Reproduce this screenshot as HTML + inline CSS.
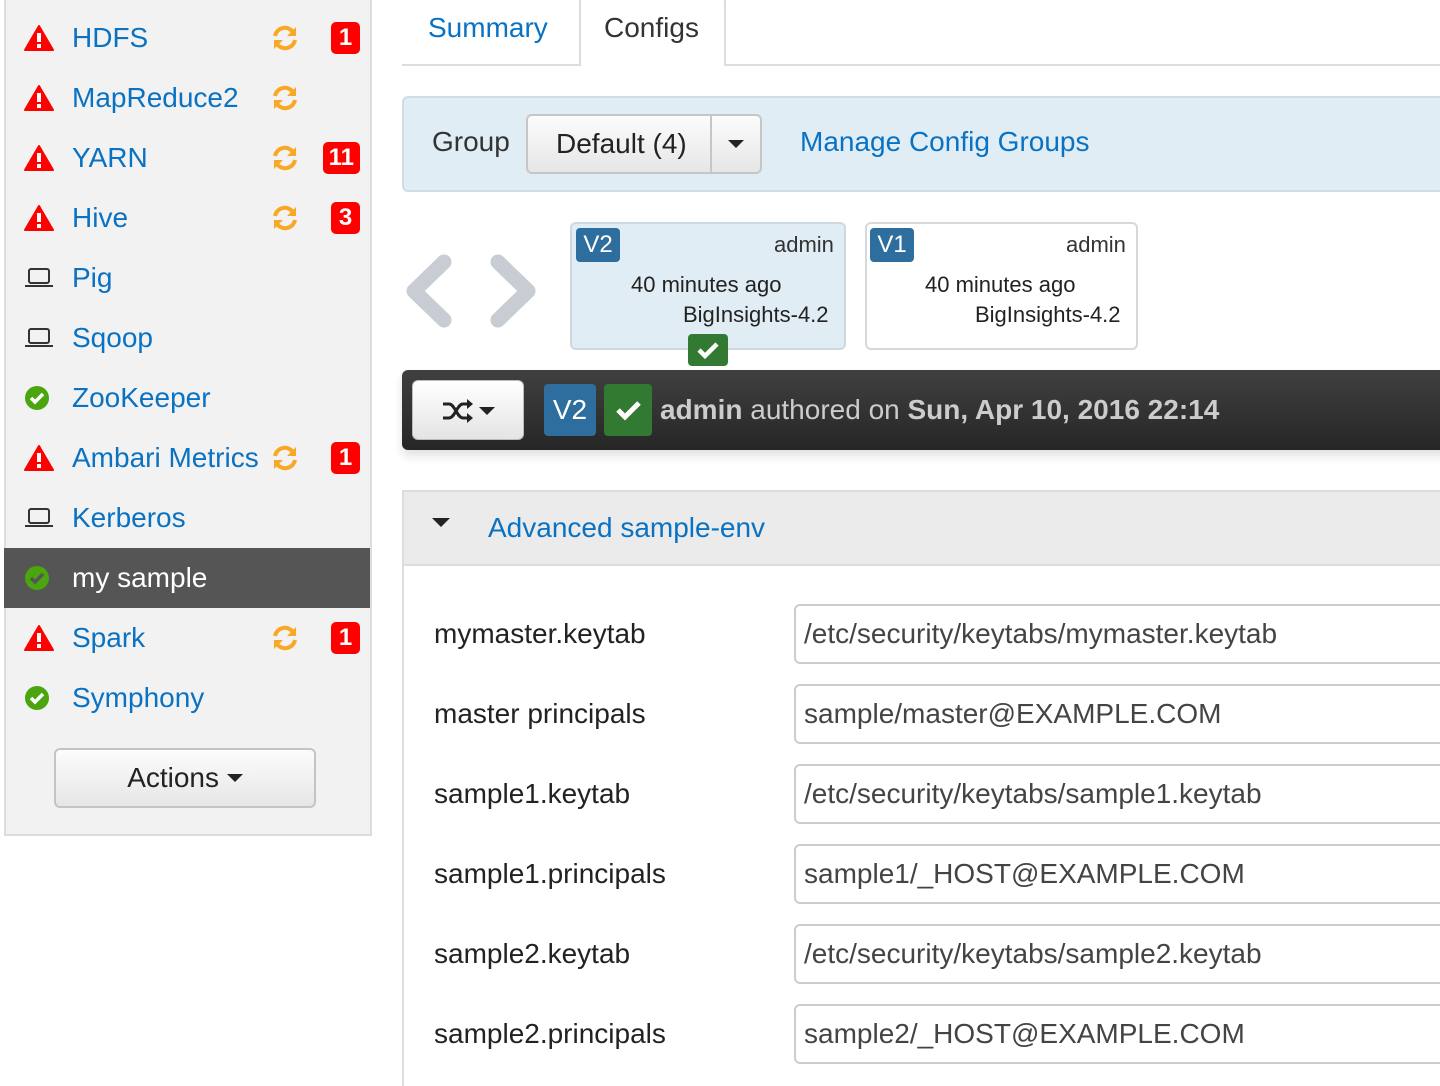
<!DOCTYPE html>
<html><head><meta charset="utf-8"><style>
*{box-sizing:border-box;margin:0;padding:0}
body{width:1440px;height:1084px;background:#fff;font-family:"Liberation Sans",Arial,sans-serif;position:relative;overflow:hidden;color:#333}
.abs{position:absolute}
#side{left:4px;top:-2px;width:368px;height:838px;background:#f2f2f2;border:2px solid #ddd;border-top:none}
.row{position:absolute;left:4px;width:366px;height:60px}
.row .t{position:absolute;left:68px;top:14px;font-size:28px;color:#0a72c3;line-height:32px;white-space:nowrap}
.row .ic{position:absolute;left:20px;top:16px;width:30px;height:28px}
.row .rf{position:absolute;left:267px;top:16px}
.badge{position:absolute;right:10px;top:14px;height:32px;min-width:29px;padding:0 6px;background:#f00;color:#fff;font-weight:bold;font-size:24px;line-height:32px;text-align:center;border-radius:5px}
.lbl{position:absolute;left:434px;font-size:28px;color:#222}
.inp{position:absolute;left:794px;width:660px;height:60px;border:2px solid #ccc;border-radius:6px;font-size:28px;line-height:56px;padding-left:8px;color:#444}
</style></head><body>
<div id="side" class="abs"></div>

<!-- rows -->
<div class="row" style="top:8px"><svg class="ic" viewBox="0 0 30 28"><path d="M15 2 L29 26 H1 Z" fill="#f00" stroke="#f00" stroke-width="2" stroke-linejoin="round"/><rect x="13" y="9" width="4" height="9" fill="#fff"/><rect x="13" y="20" width="4" height="4" fill="#fff"/></svg><span class="t">HDFS</span><svg class="rf" width="28" height="28" viewBox="0 0 28 28"><path d="M4 12 A10 10 0 0 1 22 8" fill="none" stroke="#f9a825" stroke-width="4"/><path d="M25 3 V12 H16 Z" fill="#f9a825"/><path d="M24 16 A10 10 0 0 1 6 20" fill="none" stroke="#f9a825" stroke-width="4"/><path d="M3 25 V16 H12 Z" fill="#f9a825"/></svg><span class="badge">1</span></div>

<div class="row" style="top:68px"><svg class="ic" viewBox="0 0 30 28"><path d="M15 2 L29 26 H1 Z" fill="#f00" stroke="#f00" stroke-width="2" stroke-linejoin="round"/><rect x="13" y="9" width="4" height="9" fill="#fff"/><rect x="13" y="20" width="4" height="4" fill="#fff"/></svg><span class="t">MapReduce2</span><svg class="rf" width="28" height="28" viewBox="0 0 28 28"><path d="M4 12 A10 10 0 0 1 22 8" fill="none" stroke="#f9a825" stroke-width="4"/><path d="M25 3 V12 H16 Z" fill="#f9a825"/><path d="M24 16 A10 10 0 0 1 6 20" fill="none" stroke="#f9a825" stroke-width="4"/><path d="M3 25 V16 H12 Z" fill="#f9a825"/></svg></div>

<div class="row" style="top:128px"><svg class="ic" viewBox="0 0 30 28"><path d="M15 2 L29 26 H1 Z" fill="#f00" stroke="#f00" stroke-width="2" stroke-linejoin="round"/><rect x="13" y="9" width="4" height="9" fill="#fff"/><rect x="13" y="20" width="4" height="4" fill="#fff"/></svg><span class="t">YARN</span><svg class="rf" width="28" height="28" viewBox="0 0 28 28"><path d="M4 12 A10 10 0 0 1 22 8" fill="none" stroke="#f9a825" stroke-width="4"/><path d="M25 3 V12 H16 Z" fill="#f9a825"/><path d="M24 16 A10 10 0 0 1 6 20" fill="none" stroke="#f9a825" stroke-width="4"/><path d="M3 25 V16 H12 Z" fill="#f9a825"/></svg><span class="badge">11</span></div>

<div class="row" style="top:188px"><svg class="ic" viewBox="0 0 30 28"><path d="M15 2 L29 26 H1 Z" fill="#f00" stroke="#f00" stroke-width="2" stroke-linejoin="round"/><rect x="13" y="9" width="4" height="9" fill="#fff"/><rect x="13" y="20" width="4" height="4" fill="#fff"/></svg><span class="t">Hive</span><svg class="rf" width="28" height="28" viewBox="0 0 28 28"><path d="M4 12 A10 10 0 0 1 22 8" fill="none" stroke="#f9a825" stroke-width="4"/><path d="M25 3 V12 H16 Z" fill="#f9a825"/><path d="M24 16 A10 10 0 0 1 6 20" fill="none" stroke="#f9a825" stroke-width="4"/><path d="M3 25 V16 H12 Z" fill="#f9a825"/></svg><span class="badge">3</span></div>

<div class="row" style="top:248px"><svg class="ic" viewBox="0 0 30 28"><rect x="5" y="5" width="20" height="14" rx="2" fill="none" stroke="#333" stroke-width="2"/><rect x="1" y="21" width="28" height="2" fill="#333"/></svg><span class="t">Pig</span></div>
<div class="row" style="top:308px"><svg class="ic" viewBox="0 0 30 28"><rect x="5" y="5" width="20" height="14" rx="2" fill="none" stroke="#333" stroke-width="2"/><rect x="1" y="21" width="28" height="2" fill="#333"/></svg><span class="t">Sqoop</span></div>
<div class="row" style="top:368px"><svg class="ic" viewBox="0 0 30 28"><circle cx="13" cy="14" r="12" fill="#4aa50f"/><path d="M7 14 L11 18 L19 10" fill="none" stroke="#fff" stroke-width="3.5"/></svg><span class="t">ZooKeeper</span></div>

<div class="row" style="top:428px"><svg class="ic" viewBox="0 0 30 28"><path d="M15 2 L29 26 H1 Z" fill="#f00" stroke="#f00" stroke-width="2" stroke-linejoin="round"/><rect x="13" y="9" width="4" height="9" fill="#fff"/><rect x="13" y="20" width="4" height="4" fill="#fff"/></svg><span class="t">Ambari Metrics</span><svg class="rf" width="28" height="28" viewBox="0 0 28 28"><path d="M4 12 A10 10 0 0 1 22 8" fill="none" stroke="#f9a825" stroke-width="4"/><path d="M25 3 V12 H16 Z" fill="#f9a825"/><path d="M24 16 A10 10 0 0 1 6 20" fill="none" stroke="#f9a825" stroke-width="4"/><path d="M3 25 V16 H12 Z" fill="#f9a825"/></svg><span class="badge">1</span></div>

<div class="row" style="top:488px"><svg class="ic" viewBox="0 0 30 28"><rect x="5" y="5" width="20" height="14" rx="2" fill="none" stroke="#333" stroke-width="2"/><rect x="1" y="21" width="28" height="2" fill="#333"/></svg><span class="t">Kerberos</span></div>

<div class="row" style="top:548px;background:#555"><svg class="ic" viewBox="0 0 30 28"><circle cx="13" cy="14" r="12" fill="#4aa50f"/><path d="M7 14 L11 18 L19 10" fill="none" stroke="#555" stroke-width="3.5"/></svg><span class="t" style="color:#fff">my sample</span></div>

<div class="row" style="top:608px"><svg class="ic" viewBox="0 0 30 28"><path d="M15 2 L29 26 H1 Z" fill="#f00" stroke="#f00" stroke-width="2" stroke-linejoin="round"/><rect x="13" y="9" width="4" height="9" fill="#fff"/><rect x="13" y="20" width="4" height="4" fill="#fff"/></svg><span class="t">Spark</span><svg class="rf" width="28" height="28" viewBox="0 0 28 28"><path d="M4 12 A10 10 0 0 1 22 8" fill="none" stroke="#f9a825" stroke-width="4"/><path d="M25 3 V12 H16 Z" fill="#f9a825"/><path d="M24 16 A10 10 0 0 1 6 20" fill="none" stroke="#f9a825" stroke-width="4"/><path d="M3 25 V16 H12 Z" fill="#f9a825"/></svg><span class="badge">1</span></div>

<div class="row" style="top:668px"><svg class="ic" viewBox="0 0 30 28"><circle cx="13" cy="14" r="12" fill="#4aa50f"/><path d="M7 14 L11 18 L19 10" fill="none" stroke="#fff" stroke-width="3.5"/></svg><span class="t">Symphony</span></div>

<div class="abs" style="left:54px;top:748px;width:262px;height:60px;border:2px solid #c4c4c4;border-radius:6px;background:linear-gradient(#fcfcfc,#e6e6e6);font-size:28px;line-height:56px;text-align:center;color:#222">Actions <span style="display:inline-block;width:0;height:0;border-left:8px solid transparent;border-right:8px solid transparent;border-top:8px solid #222;vertical-align:middle;margin-bottom:4px"></span></div>

<!-- tabs -->
<div class="abs" style="left:402px;top:64px;width:1038px;height:2px;background:#ddd"></div>
<div class="abs" style="left:428px;top:12px;font-size:28px;color:#0a72c3">Summary</div>
<div class="abs" style="left:579px;top:-4px;width:147px;height:70px;border:2px solid #ddd;border-bottom:none;background:#fff;border-radius:6px 6px 0 0"></div>
<div class="abs" style="left:604px;top:12px;font-size:28px;color:#333">Configs</div>

<!-- group panel -->
<div class="abs" style="left:402px;top:96px;width:1050px;height:96px;background:#e0edf4;border:2px solid #cfdde6;border-radius:6px"></div>
<div class="abs" style="left:432px;top:126px;font-size:28px;color:#333">Group</div>
<div class="abs" style="left:526px;top:114px;width:236px;height:60px;border:2px solid #c6c6c6;border-radius:6px;background:linear-gradient(#fcfcfc,#e6e6e6)"></div>
<div class="abs" style="left:710px;top:116px;width:2px;height:56px;background:#c6c6c6"></div>
<div class="abs" style="left:556px;top:128px;font-size:28px;color:#222">Default (4)</div>
<div class="abs" style="left:728px;top:140px;width:0;height:0;border-left:8px solid transparent;border-right:8px solid transparent;border-top:8px solid #222"></div>
<div class="abs" style="left:800px;top:126px;font-size:28px;color:#0a72c3">Manage Config Groups</div>

<!-- chevrons -->
<svg class="abs" style="left:400px;top:250px" width="150" height="84" viewBox="0 0 150 84"><path d="M44 12 L14 41 L44 70" fill="none" stroke="#c8cdd3" stroke-width="15" stroke-linecap="round" stroke-linejoin="round"/><path d="M98 12 L128 41 L98 70" fill="none" stroke="#c8cdd3" stroke-width="15" stroke-linecap="round" stroke-linejoin="round"/></svg>

<!-- version boxes -->
<div class="abs" style="left:570px;top:222px;width:276px;height:128px;background:#e0edf4;border:2px solid #cfd8de;border-radius:6px"></div>
<div class="abs" style="left:576px;top:228px;width:44px;height:34px;background:#2e6e9e;border-radius:4px;color:#fff;font-size:24px;line-height:34px;text-align:center">V2</div>
<div class="abs" style="left:774px;top:232px;font-size:22px;color:#333">admin</div>
<div class="abs" style="left:631px;top:272px;font-size:22px;color:#222">40 minutes ago</div>
<div class="abs" style="left:683px;top:302px;font-size:22px;color:#222">BigInsights-4.2</div>
<div class="abs" style="left:688px;top:334px;width:40px;height:32px;background:#327a31;border-radius:4px"><svg width="40" height="32" viewBox="0 0 40 32"><path d="M11 16 L17 22 L29 10" fill="none" stroke="#fff" stroke-width="4.5"/></svg></div>

<div class="abs" style="left:865px;top:222px;width:273px;height:128px;background:#fff;border:2px solid #d4d9dd;border-radius:6px"></div>
<div class="abs" style="left:870px;top:228px;width:44px;height:34px;background:#2e6e9e;border-radius:4px;color:#fff;font-size:24px;line-height:34px;text-align:center">V1</div>
<div class="abs" style="left:1066px;top:232px;font-size:22px;color:#333">admin</div>
<div class="abs" style="left:925px;top:272px;font-size:22px;color:#222">40 minutes ago</div>
<div class="abs" style="left:975px;top:302px;font-size:22px;color:#222">BigInsights-4.2</div>

<!-- dark bar -->
<div class="abs" style="left:402px;top:370px;width:1050px;height:80px;background:linear-gradient(#404040,#262626);border-radius:6px;box-shadow:0 6px 10px rgba(0,0,0,0.12)"></div>
<div class="abs" style="left:412px;top:380px;width:112px;height:60px;border-radius:6px;background:linear-gradient(#fff,#e4e4e4);border:1px solid #bbb"><svg width="112" height="60" viewBox="0 0 112 60"><path d="M30 23 H36 C42 23 44 37 50 37 H56 M30 37 H36 C42 37 44 23 50 23 H56" fill="none" stroke="#222" stroke-width="3"/><path d="M54 18 L60 23 L54 28 Z M54 32 L60 37 L54 42 Z" fill="#222"/><path d="M66 26 L82 26 L74 34 Z" fill="#222"/></svg></div>
<div class="abs" style="left:544px;top:384px;width:52px;height:52px;background:#2e6e9e;border-radius:4px;color:#fff;font-size:28px;line-height:52px;text-align:center">V2</div>
<div class="abs" style="left:604px;top:384px;width:48px;height:52px;background:#327a31;border-radius:4px"><svg width="48" height="52" viewBox="0 0 48 52"><path d="M14 26 L21 33 L35 19" fill="none" stroke="#fff" stroke-width="5"/></svg></div>
<div class="abs" style="left:660px;top:394px;font-size:28px;color:#ccc;white-space:nowrap"><b>admin</b> authored on <b>Sun, Apr 10, 2016 22:14</b></div>

<!-- section header -->
<div class="abs" style="left:402px;top:490px;width:1050px;height:76px;background:#ebebeb;border:2px solid #ddd"></div>
<div class="abs" style="left:432px;top:518px;width:0;height:0;border-left:9px solid transparent;border-right:9px solid transparent;border-top:9px solid #222"></div>
<div class="abs" style="left:488px;top:512px;font-size:28px;color:#0a72c3">Advanced sample-env</div>
<div class="abs" style="left:402px;top:566px;width:2px;height:520px;background:#ddd"></div>

<!-- fields -->
<div class="lbl" style="top:618px">mymaster.keytab</div><div class="inp" style="top:604px">/etc/security/keytabs/mymaster.keytab</div>
<div class="lbl" style="top:698px">master principals</div><div class="inp" style="top:684px">sample/master@EXAMPLE.COM</div>
<div class="lbl" style="top:778px">sample1.keytab</div><div class="inp" style="top:764px">/etc/security/keytabs/sample1.keytab</div>
<div class="lbl" style="top:858px">sample1.principals</div><div class="inp" style="top:844px">sample1/_HOST@EXAMPLE.COM</div>
<div class="lbl" style="top:938px">sample2.keytab</div><div class="inp" style="top:924px">/etc/security/keytabs/sample2.keytab</div>
<div class="lbl" style="top:1018px">sample2.principals</div><div class="inp" style="top:1004px">sample2/_HOST@EXAMPLE.COM</div>
</body></html>
